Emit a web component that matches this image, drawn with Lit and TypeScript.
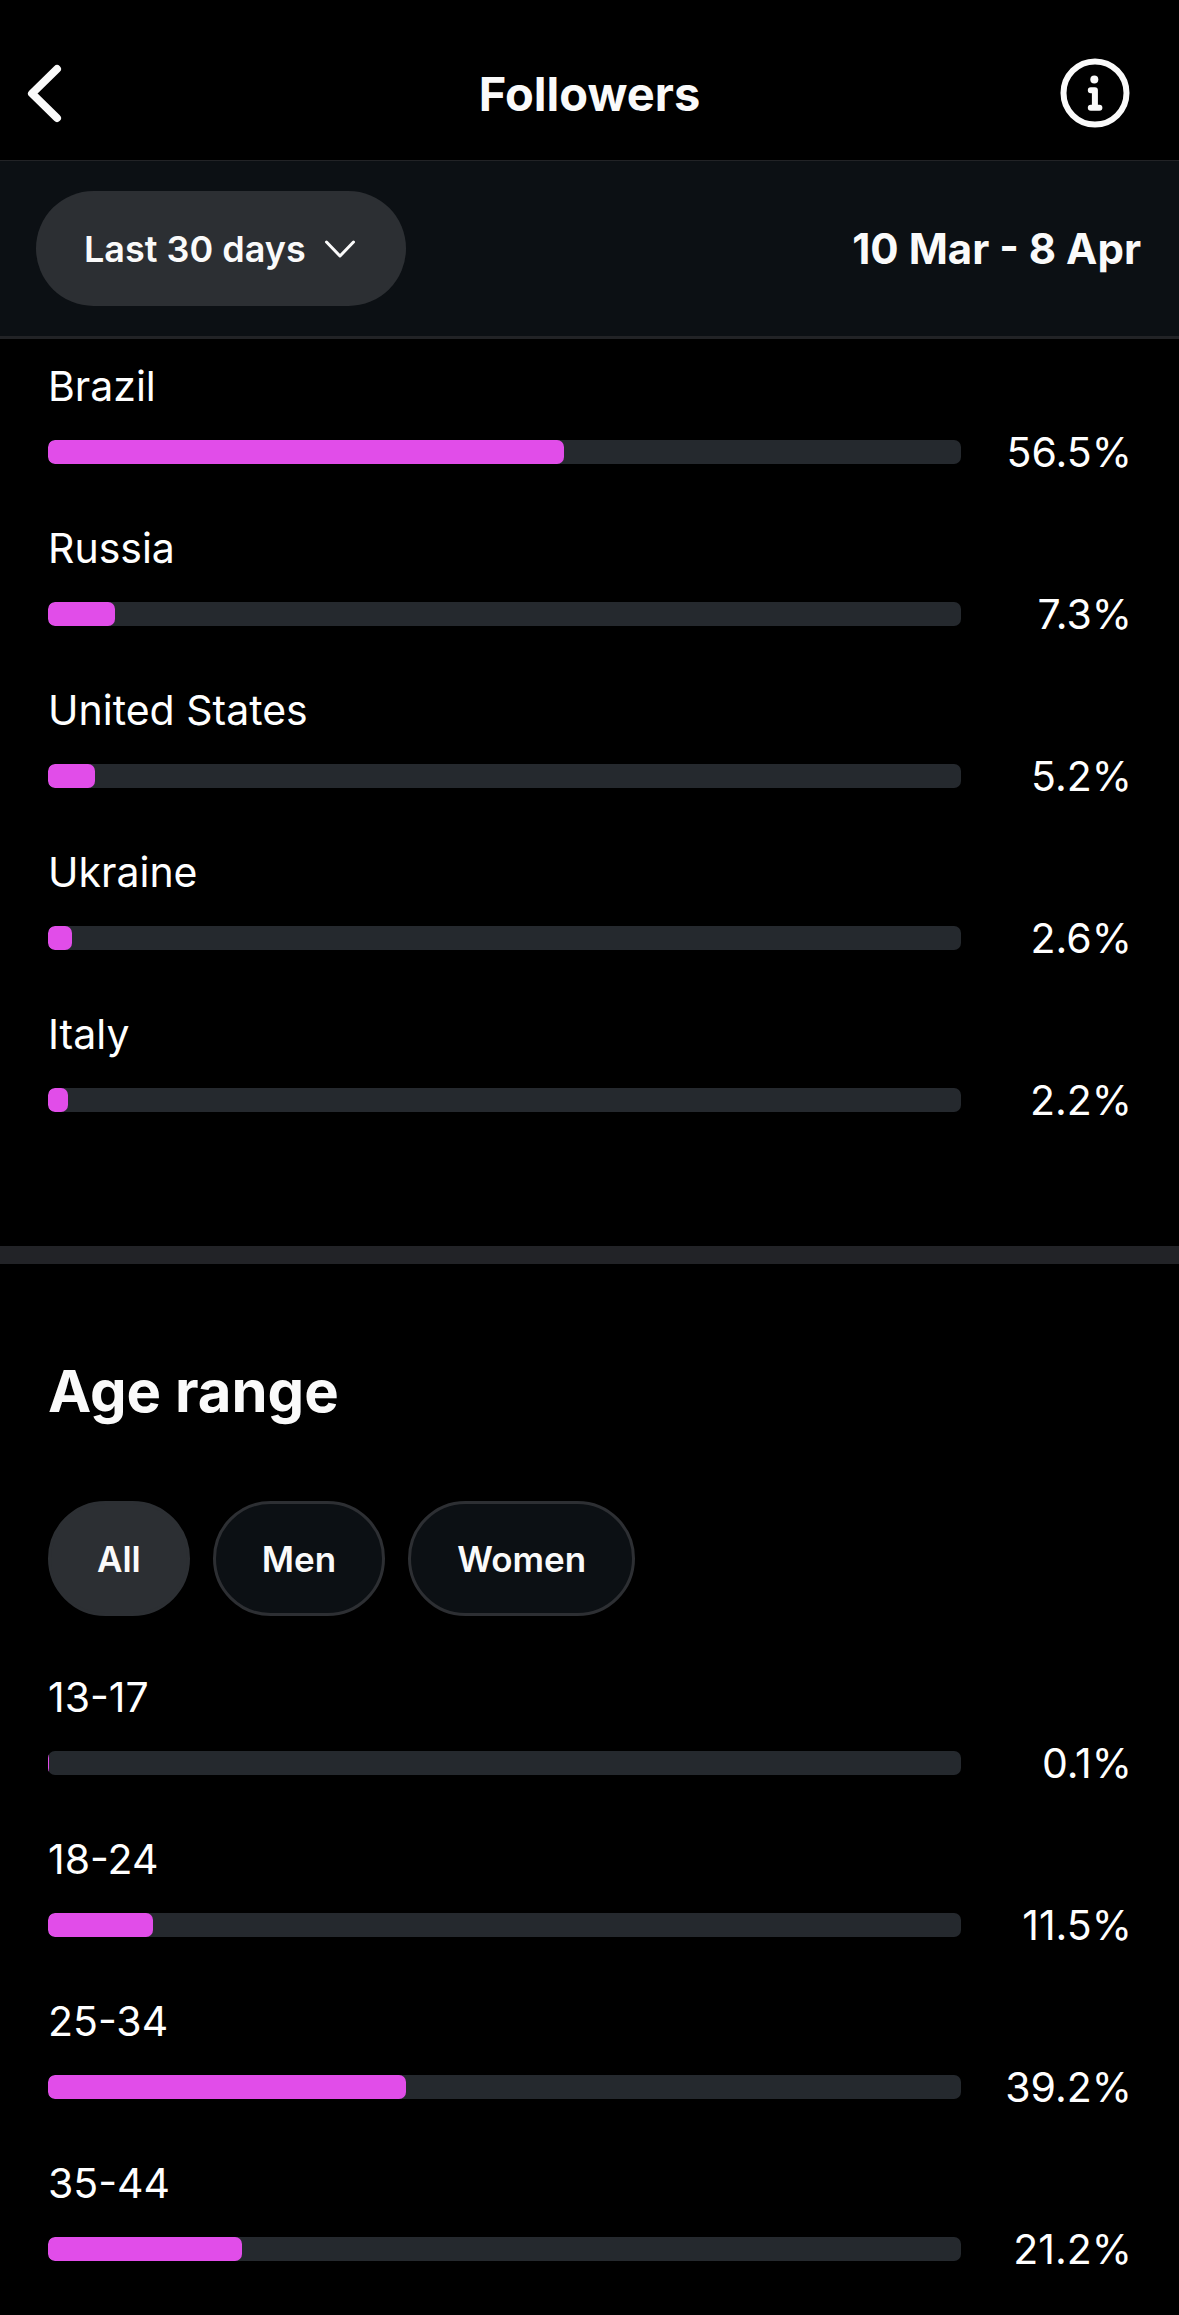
import { LitElement, html, css } from "lit";
import { customElement, property, state } from "lit/decorators.js";

interface Share {
  label: string;
  percent: number;
}

const COUNTRIES: Share[] = [
  { label: "Brazil", percent: 56.5 },
  { label: "Russia", percent: 7.3 },
  { label: "United States", percent: 5.2 },
  { label: "Ukraine", percent: 2.6 },
  { label: "Italy", percent: 2.2 },
];

const AGES: Share[] = [
  { label: "13-17", percent: 0.1 },
  { label: "18-24", percent: 11.5 },
  { label: "25-34", percent: 39.2 },
  { label: "35-44", percent: 21.2 },
];

const GROUPS = ["All", "Men", "Women"];

@customElement("share-list")
export class ShareList extends LitElement {
  @property({ attribute: false }) items: Share[] = [];

  static styles = css`
    :host {
      display: block;
    }
    .list {
      display: flex;
      flex-direction: column;
      gap: 48px;
      margin: 0;
      padding: 0;
      list-style: none;
      font-size: 41px;
      line-height: 48px;
      color: #fff;
    }
    .row {
      display: grid;
      grid-template-columns: 1fr 171px;
      row-gap: 18px;
      align-items: center;
    }
    .label {
      grid-column: 1 / -1;
    }
    .track {
      height: 24px;
      border-radius: 7px;
      overflow: hidden;
      background: #25292e;
    }
    .fill {
      height: 100%;
      border-radius: 7px;
      background: #e14de9;
    }
    .value {
      text-align: right;
    }
  `;

  render() {
    return html`
      <ul class="list">
        ${this.items.map(
          (item) => html`
            <li class="row">
              <span class="label">${item.label}</span>
              <div
                class="track"
                role="meter"
                aria-label=${item.label}
                aria-valuemin="0"
                aria-valuemax="100"
                aria-valuenow=${item.percent}
              >
                <div class="fill" style="width: ${item.percent}%"></div>
              </div>
              <span class="value">${item.percent.toFixed(1)}%</span>
            </li>
          `
        )}
      </ul>
    `;
  }
}

@customElement("app-root")
export class AppRoot extends LitElement {
  @state() private group = "All";

  static styles = css`
    :host {
      display: block;
      min-height: 100vh;
      background: #000;
      color: #fafafa;
      font-family: Inter, "Liberation Sans", sans-serif;
    }
    .header {
      display: grid;
      grid-template-columns: 1fr auto 1fr;
      align-items: center;
      padding: 56px 24px 28px;
      border-bottom: 1px solid #222326;
    }
    .title {
      grid-column: 2;
      margin: 0;
      font-size: 47px;
      line-height: 76px;
      font-weight: 700;
    }
    .icon-button {
      display: flex;
      padding: 0;
      border: 0;
      background: none;
      color: inherit;
      cursor: pointer;
    }
    .info {
      justify-self: end;
      margin-right: 24px;
    }
    .toolbar {
      display: flex;
      justify-content: space-between;
      align-items: center;
      padding: 30px 38px 30px 36px;
      border-bottom: 3px solid #222326;
      background: #0c1014;
    }
    .period {
      display: grid;
      align-items: center;
    }
    .period-select {
      grid-area: 1 / 1;
      appearance: none;
      height: 115px;
      padding: 0 100px 0 48px;
      border: 0;
      border-radius: 58px;
      background: #2c2f33;
      color: inherit;
      font: 600 36px/48px Inter, "Liberation Sans", sans-serif;
    }
    .period-icon {
      grid-area: 1 / 1;
      justify-self: end;
      margin-right: 48px;
      pointer-events: none;
    }
    .range {
      font-size: 42px;
      line-height: 48px;
      font-weight: 700;
    }
    .countries {
      padding: 23px 47px 122px 48px;
      border-bottom: 18px solid #222327;
    }
    .ages {
      padding: 91px 47px 48px 48px;
    }
    .heading {
      margin: 0;
      font-size: 58px;
      line-height: 72px;
      font-weight: 700;
    }
    .chips {
      display: flex;
      gap: 23px;
      margin: 74px 0 57px;
    }
    .chip {
      height: 115px;
      padding: 0 46px;
      border: 3px solid #2d2f33;
      border-radius: 58px;
      background: #0c1014;
      color: inherit;
      font: 600 35px/48px Inter, "Liberation Sans", sans-serif;
      cursor: pointer;
    }
    .chip[aria-pressed="true"] {
      border-color: #2c2f33;
      background: #2c2f33;
    }
  `;

  render() {
    return html`
      <header class="header">
        <button class="icon-button" aria-label="Back">
          <svg width="42" height="70" viewBox="0 0 42 70" fill="none" stroke="currentColor"
            stroke-width="8" stroke-linecap="round" stroke-linejoin="round">
            <path d="M33 10 8 34.5 33 59" />
          </svg>
        </button>
        <h1 class="title">Followers</h1>
        <button class="icon-button info" aria-label="Information">
          <svg width="72" height="72" viewBox="0 0 72 72" fill="none" stroke="currentColor"
            stroke-width="6" stroke-linecap="round" stroke-linejoin="round">
            <circle cx="36" cy="35" r="31.5" />
            <circle cx="35.3" cy="21.5" r="4" fill="currentColor" stroke="none" />
            <path d="M31.8 32.3h4.1v17.4M31.8 49.7h8.6" />
          </svg>
        </button>
      </header>

      <div class="toolbar">
        <div class="period">
          <select class="period-select" aria-label="Period">
            <option>Last 30 days</option>
          </select>
          <svg class="period-icon" width="36" height="24" viewBox="0 0 36 24" fill="none"
            stroke="currentColor" stroke-width="3" stroke-linecap="round" stroke-linejoin="round">
            <path d="M4.5 5 18 19 31.5 5" />
          </svg>
        </div>
        <span class="range">10 Mar - 8 Apr</span>
      </div>

      <section class="countries" aria-label="Top countries">
        <share-list .items=${COUNTRIES}></share-list>
      </section>

      <section class="ages" aria-labelledby="age-heading">
        <h2 class="heading" id="age-heading">Age range</h2>
        <div class="chips">
          ${GROUPS.map(
            (name) => html`
              <button
                class="chip"
                aria-pressed=${this.group === name ? "true" : "false"}
                @click=${() => (this.group = name)}
              >${name}</button>
            `
          )}
        </div>
        <share-list .items=${AGES}></share-list>
      </section>
    `;
  }
}
